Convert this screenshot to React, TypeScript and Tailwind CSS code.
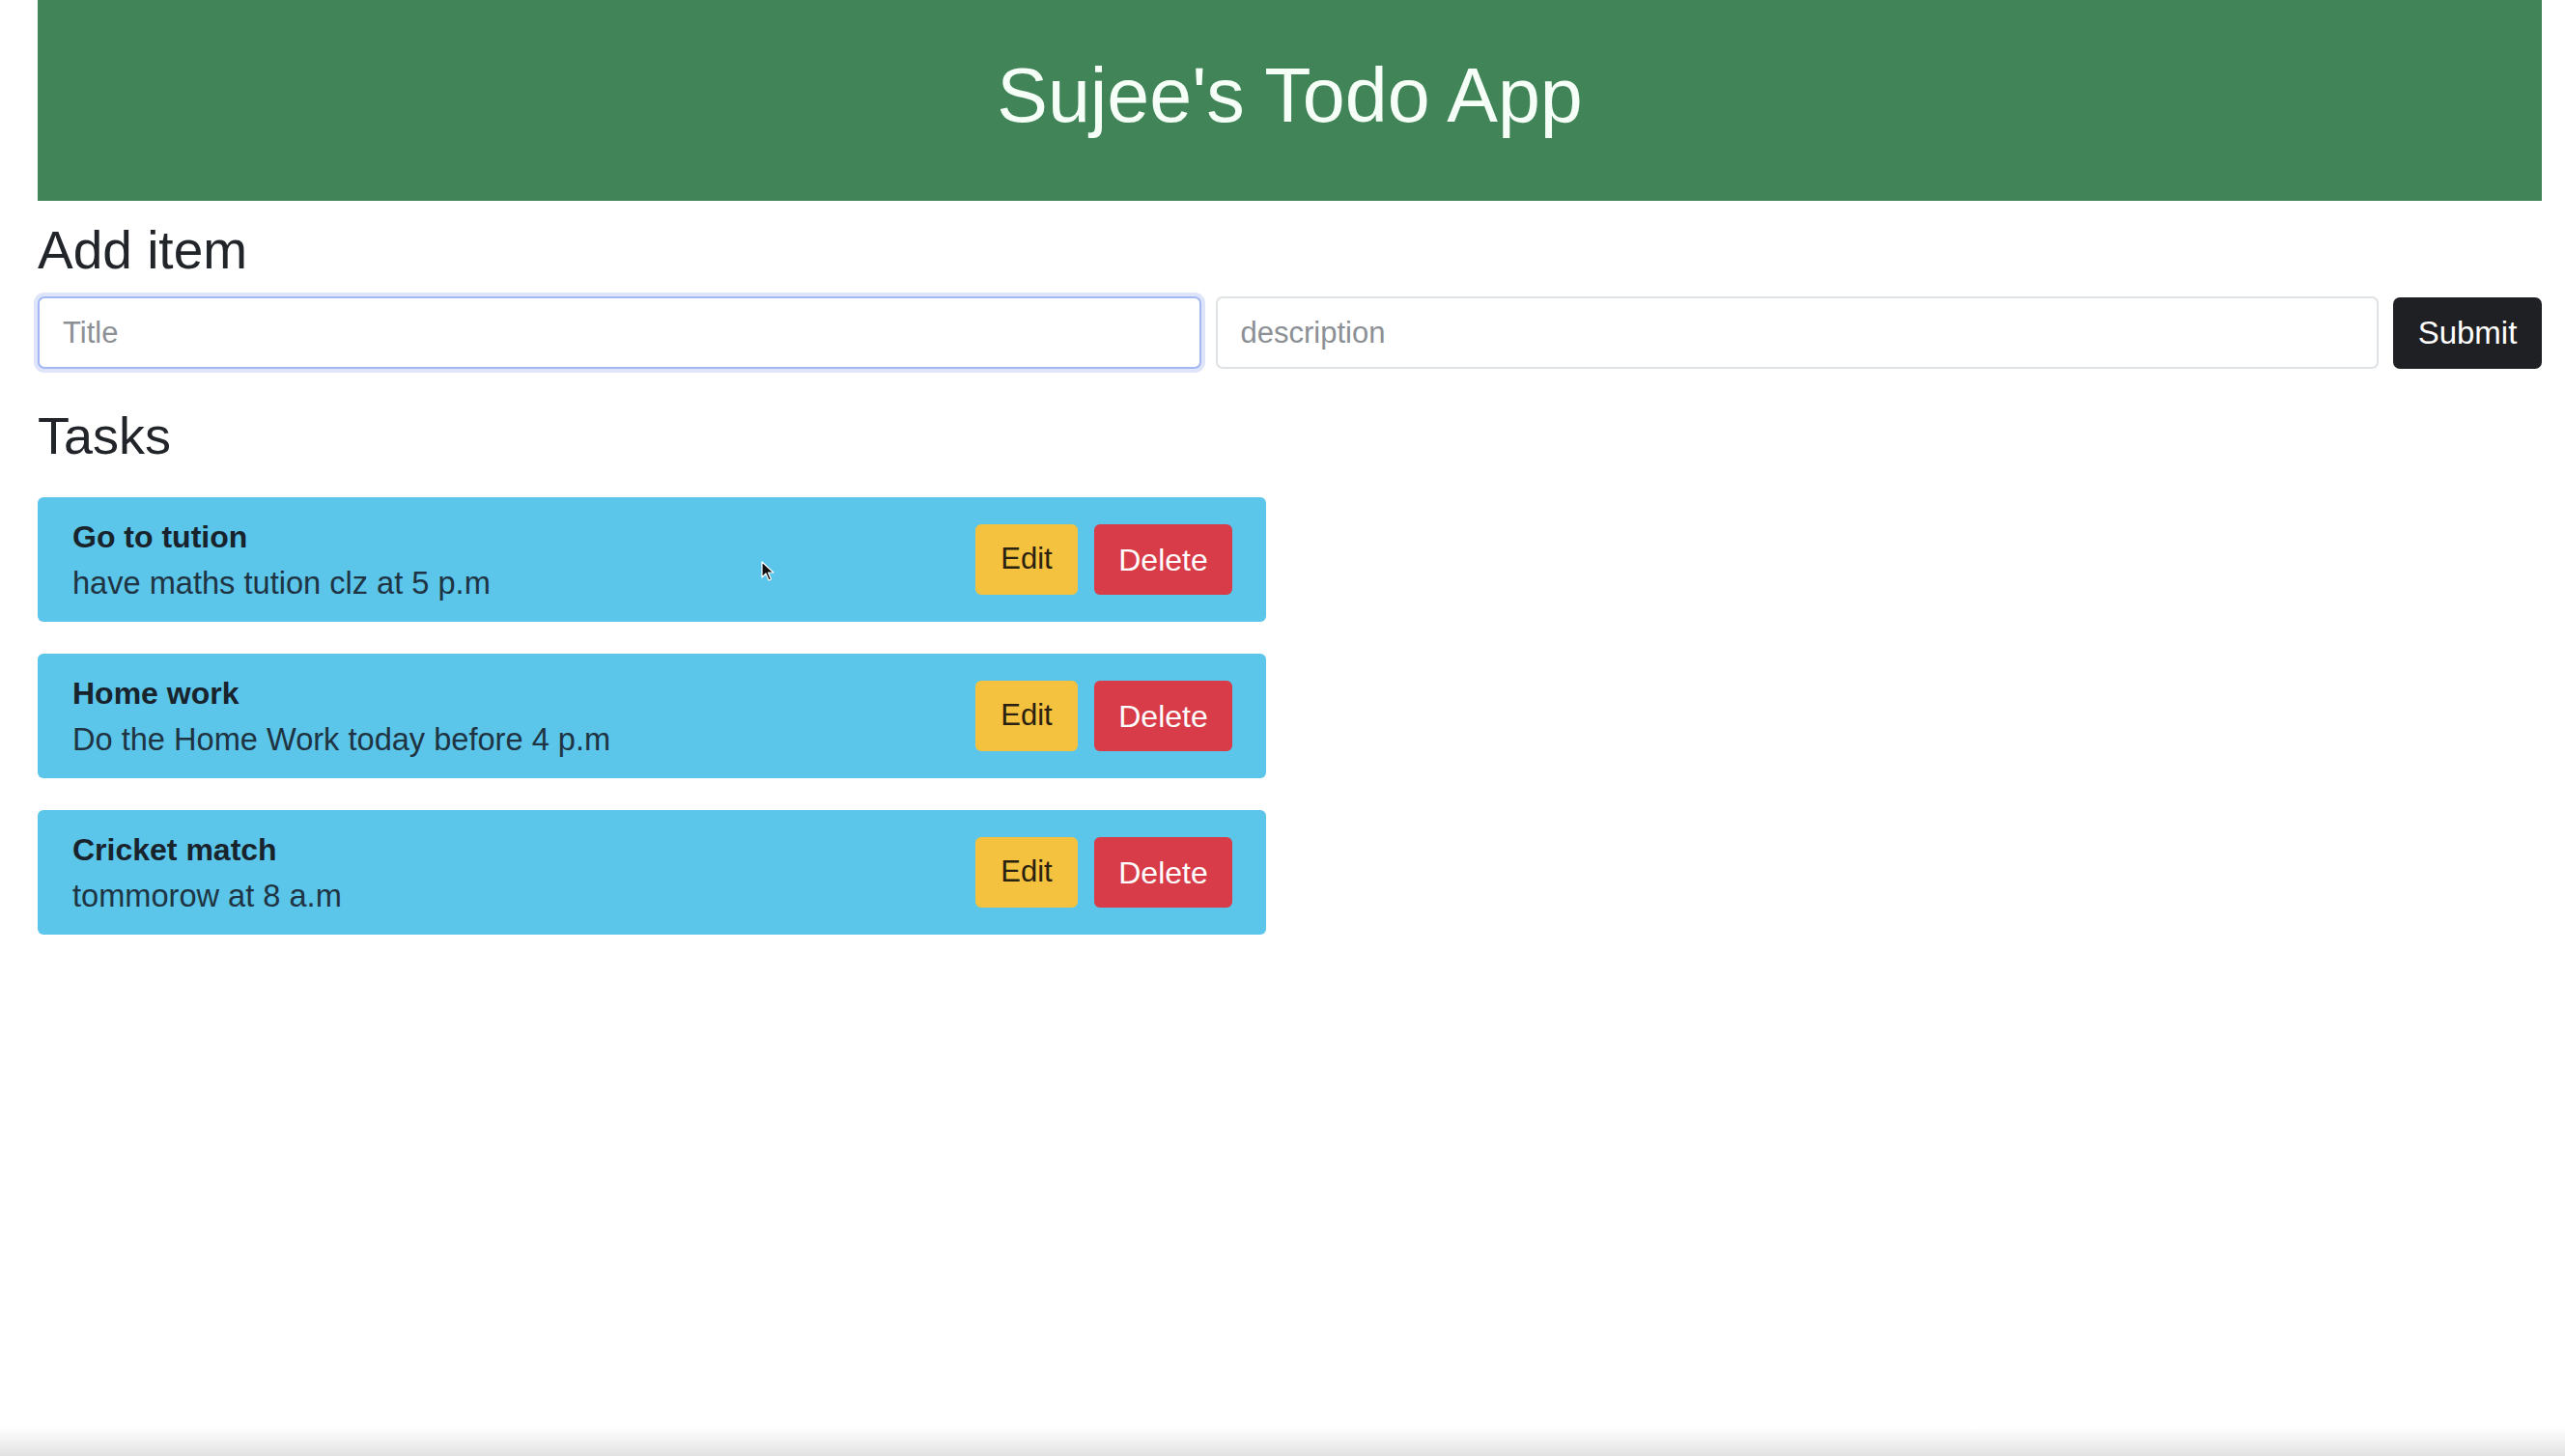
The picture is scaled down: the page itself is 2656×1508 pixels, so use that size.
import React from "react";

type Task = { title: string; description: string };

const tasks: Task[] = [
    { title: "Go to tution", description: "have maths tution clz at 5 p.m" },
    { title: "Home work", description: "Do the Home Work today before 4 p.m" },
    { title: "Cricket match", description: "tommorow at 8 a.m" },
];

const Cursor = () => (
    <svg width="14" height="22" viewBox="0 0 14 22" className="absolute left-[749px] top-[66px]">
        <path d="M1 1 L1 17 L5 13 L8 20 L10.5 19 L7.5 12 L13 12 Z" fill="#111" stroke="#fff" strokeWidth="1.2" strokeLinejoin="round" />
    </svg>
);

const TaskCard = ({ task, withCursor }: { task: Task; withCursor?: boolean }) => {
    return (
        <div className="relative flex h-[129px] items-center justify-between rounded-[6px] bg-[#5bc5ea] pl-[36px] pr-[35px]">
            <div className="flex flex-col leading-[48px]">
                <span className="text-[32px] font-bold text-[#18232c]">{task.title}</span>
                <span className="text-[32.6px] text-[#1f3442]">{task.description}</span>
            </div>
            <div className="flex items-center gap-[17px]">
                <button className="h-[73px] w-[106px] rounded-[6px] bg-[#f4c23e] text-[31px] text-[#2a2110]">Edit</button>
                <button className="h-[73px] w-[143px] rounded-[6px] bg-[#d73c48] text-[32px] font-medium text-white">Delete</button>
            </div>
            {withCursor && <Cursor />}
        </div>
    );
};

export default function App() {
    return (
        <div className="relative min-h-screen bg-white pl-[39px] pr-[24px] font-['Liberation_Sans',Arial,sans-serif] text-[#212529]">
            <header className="flex h-[208px] items-center justify-center bg-[#408457] pb-[12px]">
                <h1 className="text-[79px] leading-none text-[#f6fff7]">Sujee's Todo App</h1>
            </header>

            <h2 className="mt-[18px] text-[55px] leading-[66px]">Add item</h2>

            <div className="mt-[15px] flex items-center gap-[15px]">
                <input
                    placeholder="Title"
                    className="h-[75px] flex-1 rounded-[7px] border-2 border-[#a3b8f2] bg-white px-[24px] text-[31px] shadow-[0_0_0_4px_rgba(160,178,240,0.35)] outline-none placeholder:text-[#8c9095]"
                />
                <input
                    placeholder="description"
                    className="h-[75px] flex-1 rounded-[7px] border-2 border-[#dfe2e5] bg-white px-[24px] text-[31px] outline-none placeholder:text-[#8c9095]"
                />
                <button className="h-[74px] w-[154px] rounded-[7px] bg-[#1f2023] text-[33px] text-white">Submit</button>
            </div>

            <h2 className="mt-[36px] text-[54px] leading-[66px]">Tasks</h2>

            <div className="mt-[31px] flex w-[1272px] flex-col gap-[33px]">
                {tasks.map((t, i) => (
                    <TaskCard key={t.title} task={t} withCursor={i === 0} />
                ))}
            </div>

            <div className="pointer-events-none fixed inset-x-0 bottom-0 h-[30px] bg-gradient-to-b from-[rgba(255,255,255,0)] to-[#e2e2e2]" />
        </div>
    );
}
